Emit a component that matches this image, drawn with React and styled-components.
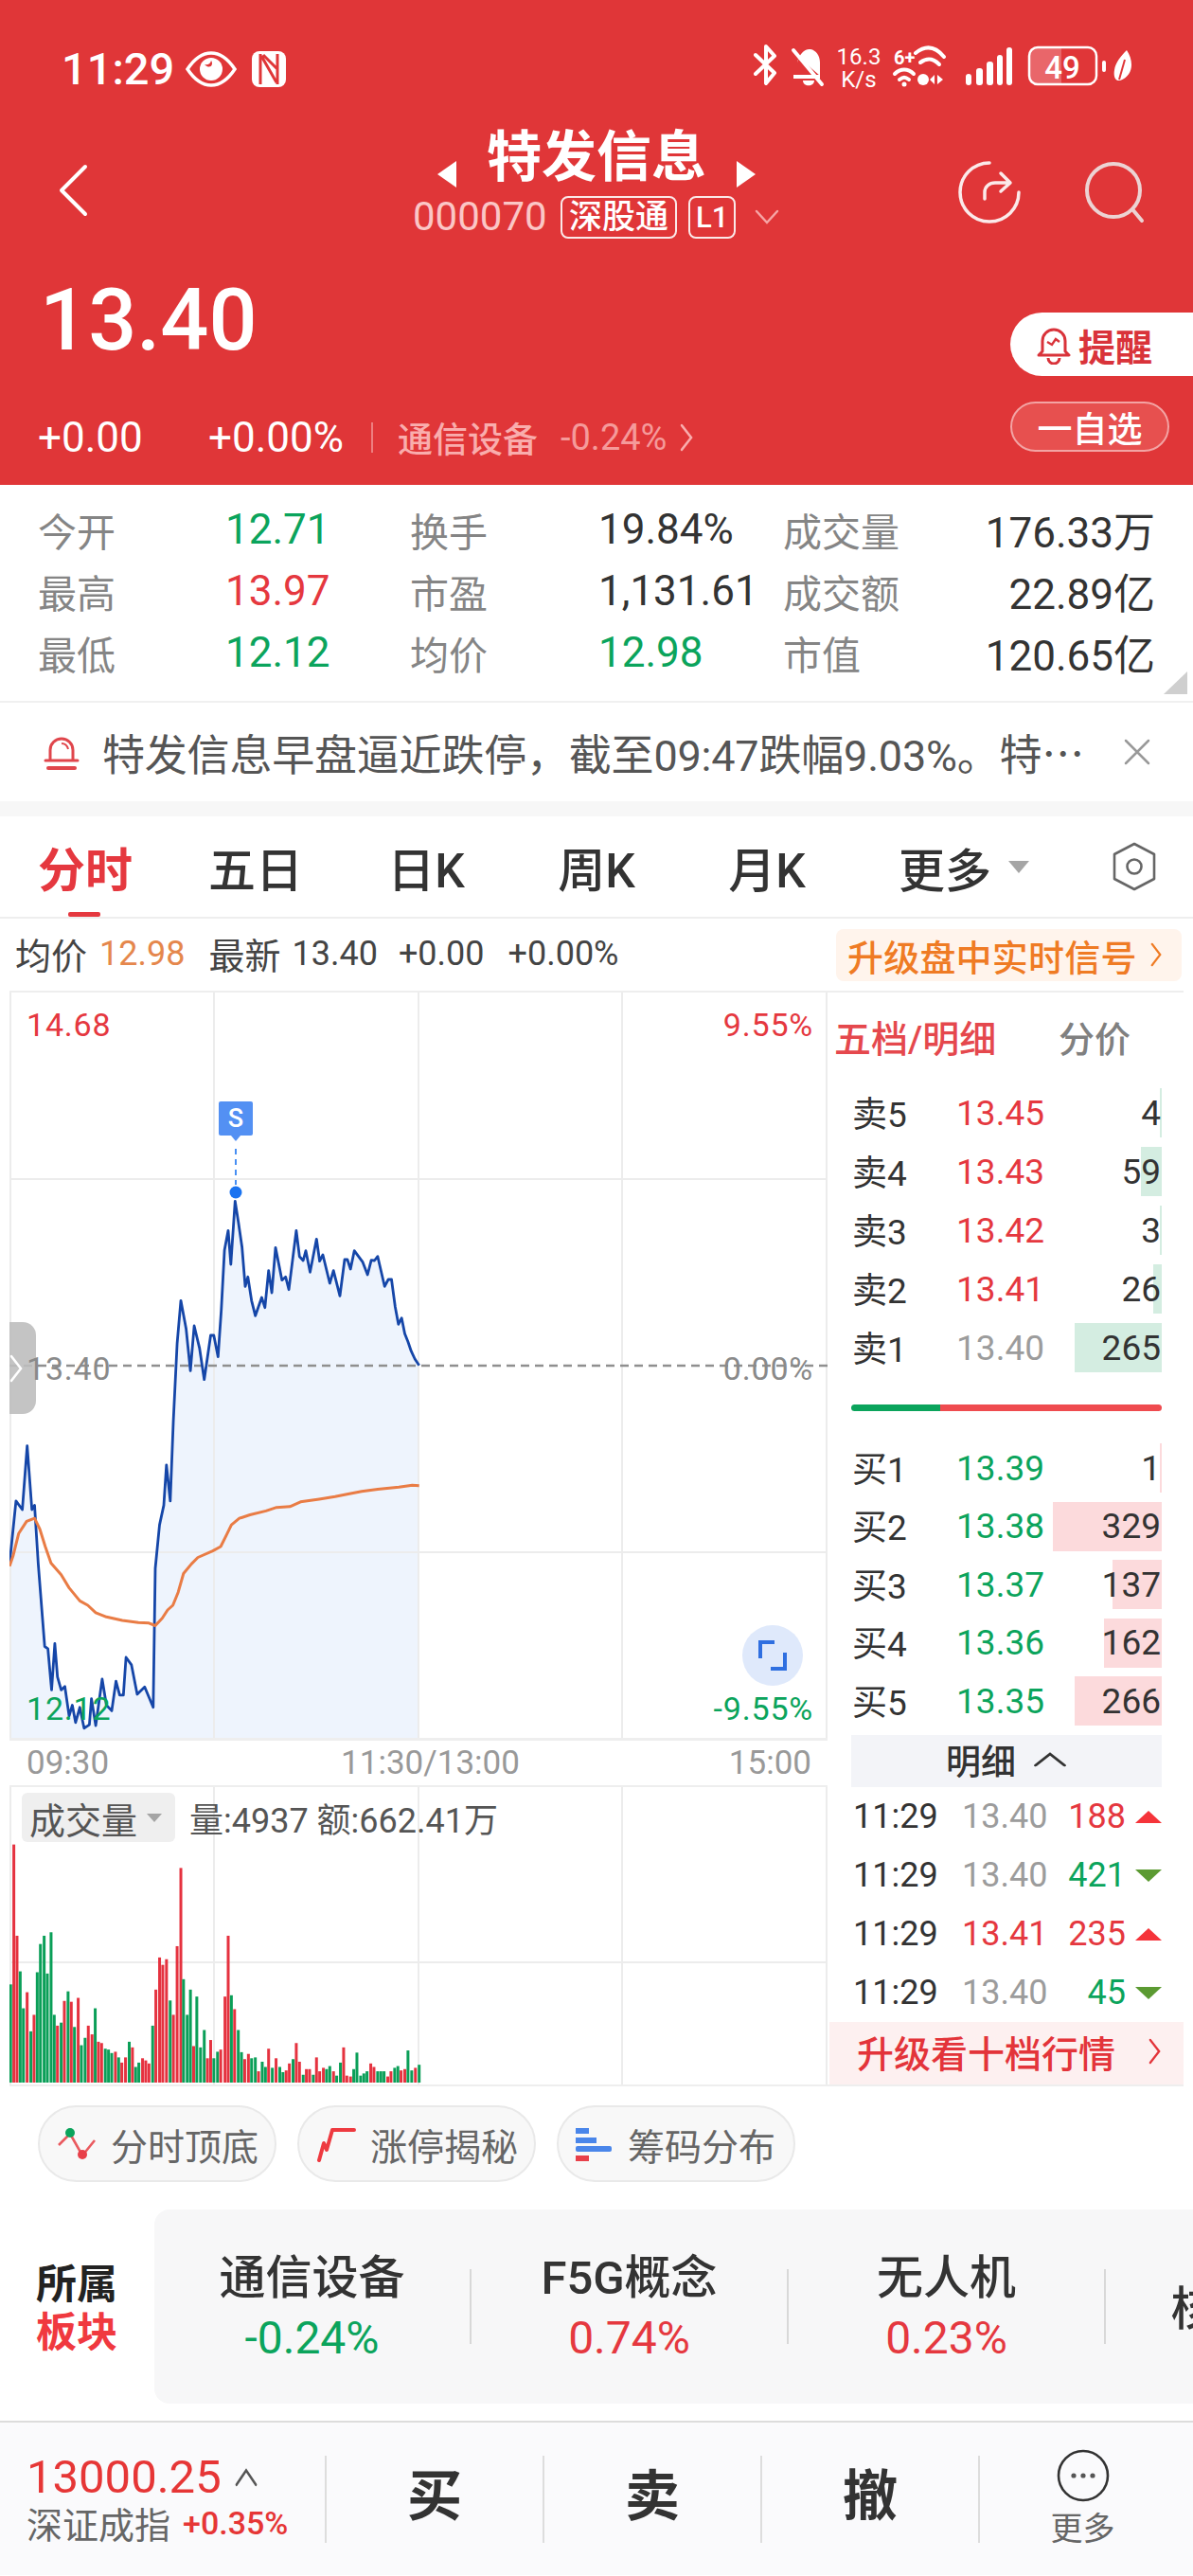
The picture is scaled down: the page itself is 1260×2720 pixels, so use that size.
import React from 'react';
import styled, { createGlobalStyle } from 'styled-components';

const GlobalStyle = createGlobalStyle`
  html, body { margin: 0; padding: 0; background: #fff; }
  body { font-family: Roboto, "Noto Sans CJK SC", sans-serif; }
  * { box-sizing: border-box; }
`;

const RED = '#E5383F';
const GREEN = '#0BA45C';

const Page = styled.div`
  width: 1260px;
  height: 2720px;
  overflow: hidden;
  background: #fff;
  color: #333;
`;

/* ---------- red header ---------- */
const Header = styled.header`
  height: 512px;
  background: #e03638;
  color: #fff;
`;

const StatusBar = styled.div`
  height: 98px;
  padding: 48px 0 0 65px;
  display: flex;
  align-items: center;
`;

const Clock = styled.span`
  font-size: 47px;
  line-height: 50px;
  font-weight: 500;
  width: 131px;
`;

const StatusIcons = styled.div`
  margin-left: auto;
  margin-right: 64px;
`;

const NavRow = styled.div`
  height: 164px;
  display: grid;
  grid-template-columns: 400px 1fr 260px;
  align-items: center;
`;

const BackButton = styled.div`
  padding: 0 0 0 60px;
  margin-top: 46px;
`;

const TitleBlock = styled.div`
  display: flex;
  flex-direction: column;
  align-items: flex-start;
  margin-top: 28px;
`;

const TitleRow = styled.div`
  display: flex;
  align-items: center;
  margin-left: 62px;
  height: 60px;
`;

const StockName = styled.h1`
  margin: 0 32px;
  font-size: 58px;
  line-height: 60px;
  font-weight: 700;
`;

const Arrow = styled.span`
  width: 0;
  height: 0;
  margin-top: 36px;
  border-top: 14px solid transparent;
  border-bottom: 14px solid transparent;
  ${({ $dir }) => ($dir === 'left' ? 'border-right: 20px solid #fff;' : 'border-left: 20px solid #fff;')}
`;

const CodeRow = styled.div`
  display: flex;
  align-items: center;
  margin: 10px 0 0 36px;
`;

const Code = styled.span`
  font-size: 42px;
  line-height: 46px;
  color: #fbc6c6;
  width: 156px;
`;

const Tag = styled.span`
  height: 45px;
  padding: 0 ${({ $wide }) => ($wide ? 7 : 6)}px;
  margin-right: ${({ $wide }) => ($wide ? 12 : 20)}px;
  border: 2px solid #fbe9e9;
  border-radius: 8px;
  font-size: ${({ $wide }) => ($wide ? 35 : 31)}px;
  line-height: 39px;
  font-weight: 500;
  display: flex;
  align-items: center;
`;

const NavActions = styled.div`
  display: flex;
  justify-content: flex-end;
  padding-right: 47px;
  margin-top: 46px;
`;

const QuoteRow = styled.div`
  display: flex;
  justify-content: space-between;
`;

const PriceBlock = styled.div`
  padding: 27px 0 0 42px;
`;

const BigPrice = styled.div`
  font-size: 90px;
  line-height: 100px;
  font-weight: 500;
`;

const ChangeRow = styled.div`
  margin: 48px 0 0 -2px;
  height: 50px;
  display: flex;
  align-items: center;
  font-size: 44px;
`;

const ChangeValue = styled.span`
  width: ${({ $w }) => $w}px;
`;

const VDivider = styled.span`
  width: 2px;
  height: 32px;
  margin: 0 26px 0 0;
  background: #ee7f80;
`;

const Sector = styled.span`
  font-size: 37px;
  color: #f9adad;
  font-weight: 500;
  margin-right: 24px;
`;

const SectorPct = styled.span`
  font-size: 38px;
  color: #f59a9a;
  margin-right: 14px;
`;

const AlertColumn = styled.div`
  width: 193px;
  padding-top: 68px;
`;

const RemindButton = styled.div`
  height: 67px;
  background: #fff;
  border-radius: 34px 0 0 34px;
  display: flex;
  align-items: center;
  padding-left: 28px;
  gap: 8px;
  color: #d9333a;
  font-size: 39px;
  font-weight: 700;
`;

const WatchButton = styled.div`
  margin-top: 27px;
  width: 168px;
  height: 53px;
  border: 2px solid #f3a4a4;
  border-radius: 27px;
  background: #e7504f;
  display: flex;
  align-items: center;
  justify-content: center;
  font-size: 37px;
  font-weight: 500;
`;

/* ---------- stats ---------- */
const Stats = styled.section`
  position: relative;
  height: 230px;
  padding: 14px 40px 0;
  display: grid;
  grid-template-columns: 198px 195px 199px 195px auto 1fr;
  grid-auto-rows: 65px;
  align-items: center;
  border-bottom: 2px solid #f0f0f0;
`;

const StatLabel = styled.span`
  color: #858585;
  font-size: 41px;
`;

const StatValue = styled.span`
  color: ${({ $c }) => $c || '#333'};
  text-align: ${({ $right }) => ($right ? 'right' : 'left')};
  font-size: 44px;
  white-space: nowrap;
`;

const CornerMark = styled.span`
  position: absolute;
  right: 6px;
  bottom: 7px;
  width: 0;
  height: 0;
  border-left: 25px solid transparent;
  border-bottom: 24px solid #cfcfcf;
`;

const NewsBar = styled.section`
  height: 104px;
  padding: 0 45px;
  display: flex;
  align-items: center;
  color: #555;
`;

const NewsText = styled.span`
  flex: 1;
  margin-left: 23px;
  font-size: 45px;
  white-space: nowrap;
  letter-spacing: -0.2px;
`;

const Band = styled.div`
  height: 16px;
  background: #f7f7f7;
`;

/* ---------- tabs ---------- */
const TabBar = styled.nav`
  height: 108px;
  border-bottom: 2px solid #eee;
  display: flex;
  align-items: center;
`;

const Tab = styled.div`
  position: relative;
  width: 180px;
  height: 106px;
  display: flex;
  align-items: center;
  justify-content: center;
  font-size: 50px;
  font-weight: ${({ $on }) => ($on ? 700 : 500)};
  color: ${({ $on }) => ($on ? RED : '#333')};
  ${({ $on }) => $on && `
    &::after {
      content: '';
      position: absolute;
      left: 72px;
      bottom: 0;
      width: 34px;
      height: 5px;
      border-radius: 2px;
      background: ${RED};
    }
  `}
`;

const MoreTab = styled.div`
  display: flex;
  align-items: center;
  margin-left: 49px;
  font-size: 49px;
  font-weight: 500;
`;

const SmallCaret = styled.span`
  width: 0;
  height: 0;
  margin-left: ${({ $ml }) => $ml || 0}px;
  border-left: ${({ $s }) => $s}px solid transparent;
  border-right: ${({ $s }) => $s}px solid transparent;
  border-top: ${({ $s }) => $s * 1.2}px solid #a5a5a5;
`;

const SettingsWrap = styled.div`
  margin-left: 87px;
  display: flex;
`;

const InfoRow = styled.div`
  height: 76px;
  padding-left: 16px;
  display: flex;
  align-items: center;
  font-size: 36px;
  color: #444;
`;

const InfoItem = styled.span`
  margin-right: ${({ $mr }) => $mr}px;
  color: ${({ $c }) => $c || '#444'};
  margin-top: -3px;
`;

const InfoLabel = styled.span`
  margin-right: ${({ $mr }) => $mr}px;
  font-size: 38px;
  margin-top: -3px;
`;

const UpgradeSignal = styled.div`
  position: relative;
  margin-left: auto;
  margin-right: 12px;
  width: 365px;
  height: 55px;
  border-radius: 8px;
  background: #fff4ec;
  color: #ef7b24;
  font-size: 38px;
  font-weight: 500;
  display: flex;
  align-items: center;
  padding-left: 12px;
  letter-spacing: 0.2px;
  white-space: nowrap;
`;

/* ---------- chart + depth board ---------- */
const Board = styled.section`
  margin: 0 10px;
  height: 1157px;
  border-top: 2px solid #eee;
  border-bottom: 2px solid #eee;
  display: flex;
`;

const ChartColumn = styled.div`
  width: 864px;
  display: flex;
  flex-direction: column;
`;

const Pane = styled.div`
  position: relative;
  height: ${({ $h }) => $h}px;
  svg { display: block; }
`;

const PriceTag = styled.span`
  position: absolute;
  ${({ $right }) => ($right ? 'right: 15px;' : 'left: 18px;')}
  top: ${({ $top }) => $top}px;
  font-size: 34px;
  line-height: 40px;
  letter-spacing: 0.8px;
  color: ${({ $c }) => $c};
`;

const SideHandle = styled.div`
  position: absolute;
  left: 0;
  top: 348px;
  width: 28px;
  height: 97px;
  background: rgba(190, 190, 190, 0.9);
  border-radius: 0 14px 14px 0;
  display: flex;
  align-items: center;
`;

const SignalFlag = styled.div`
  position: absolute;
  left: 221px;
  top: 115px;
  width: 36px;
  height: 36px;
  background: #5390f3;
  border-radius: 2px;
  color: #fff;
  font-size: 27px;
  font-weight: 500;
  text-align: center;
  line-height: 36px;
  &::after {
    content: '';
    position: absolute;
    left: 13px;
    top: 36px;
    border-left: 5px solid transparent;
    border-right: 5px solid transparent;
    border-top: 6px solid #5390f3;
  }
`;

const ExpandButton = styled.div`
  position: absolute;
  left: 774px;
  top: 668px;
  width: 64px;
  height: 64px;
  border-radius: 50%;
  background: #dfe9fb;
  display: flex;
  align-items: center;
  justify-content: center;
`;

const TimeAxis = styled.div`
  height: 53px;
  border-top: 3px solid #eee;
  border-bottom: 2px solid #eee;
  padding: 0 17px 0 18px;
  display: flex;
  justify-content: space-between;
  align-items: center;
  font-size: 35px;
  color: #999;
`;

const MiddleTime = styled.span`
  margin-left: 24px;
`;

const VolumeHeader = styled.div`
  position: absolute;
  left: 13px;
  top: 6px;
  display: flex;
  align-items: center;
`;

const VolumeChip = styled.div`
  width: 162px;
  height: 52px;
  border-radius: 6px;
  background: #efefef;
  display: flex;
  align-items: center;
  padding-left: 8px;
  color: #555;
  font-size: 38px;
`;

const VolumeText = styled.span`
  margin-left: 15px;
  font-size: 36px;
  color: #555;
  white-space: nowrap;
`;

const DepthColumn = styled.div`
  width: 376px;
  padding: 0 23px 0 25px;
`;

const DepthHead = styled.div`
  height: 92px;
  margin: 0 0 9px -18px;
  display: flex;
  align-items: center;
  font-size: 39px;
  font-weight: 500;
`;

const DepthTitle = styled.span`
  color: #e5484d;
  width: 237px;
  white-space: nowrap;
`;

const DepthSub = styled.span`
  color: #808080;
  font-size: 38px;
`;

const QuoteList = styled.div`
  display: flex;
  flex-direction: column;
  gap: ${({ $gap }) => $gap}px;
`;

const QuoteItem = styled.div`
  position: relative;
  height: 52px;
  display: grid;
  grid-template-columns: 60px 144px 1fr;
  align-items: center;
  font-size: 37px;
`;

const Bar = styled.span`
  position: absolute;
  right: 0;
  top: 0;
  bottom: 0;
  background: ${({ $sell }) => ($sell ? '#d4ede1' : '#fcdadc')};
`;

const QuoteLabel = styled.span`
  position: relative;
  color: #333;
  padding-left: 1px;
  white-space: nowrap;
  margin-top: -3px;
`;

const QuotePrice = styled.span`
  position: relative;
  color: ${({ $c }) => $c};
  text-align: ${({ $left }) => ($left ? 'left' : 'right')};
`;

const QuoteVol = styled.span`
  position: relative;
  color: #333;
  text-align: right;
  padding-right: 1px;
`;

const RatioBar = styled.div`
  margin: 34px 0;
  height: 7px;
  border-radius: 4px;
  background: linear-gradient(90deg, ${GREEN} 0 94px, #ef4b4f 94px 100%);
`;

const DetailToggle = styled.div`
  margin-top: 10px;
  height: 55px;
  background: #f3f4f8;
  display: flex;
  align-items: center;
  justify-content: center;
  gap: 18px;
  padding-bottom: 3px;
  font-size: 37px;
  font-weight: 500;
`;

const TickList = styled.div`
  margin-top: 5px;
  display: flex;
  flex-direction: column;
  gap: 10px;
`;

const TickRow = styled.div`
  height: 52px;
  display: grid;
  grid-template-columns: 117px 90px 83px 1fr;
  align-items: center;
  font-size: 36px;
`;

const TickTime = styled.span`
  padding-left: 2px;
  color: #333;
`;

const TickVol = styled.span`
  color: ${({ $c }) => $c};
  text-align: right;
`;

const TickArrow = styled.span`
  justify-self: end;
  width: 0;
  height: 0;
  border-left: 14px solid transparent;
  border-right: 14px solid transparent;
  ${({ $up }) => ($up ? 'border-bottom: 13px solid #f5343a;' : 'border-top: 13px solid #5b9a32;')}
`;

const UpgradeDepth = styled.div`
  margin: 5px -23px 0 -23px;
  height: 66px;
  background: #fdf0f0;
  display: flex;
  align-items: center;
  padding: 0 24px 4px 29px;
  justify-content: space-between;
  color: #e3343a;
  font-size: 39px;
  font-weight: 500;
  white-space: nowrap;
`;

/* ---------- pills / sectors ---------- */
const PillRow = styled.div`
  display: flex;
  gap: 22px;
  padding: 20px 0 0 40px;
`;

const Pill = styled.div`
  width: 252px;
  height: 81px;
  background: #f8f8f8;
  border: 2px solid #e9e9e9;
  border-radius: 41px;
  display: flex;
  align-items: center;
  padding-left: 18px;
  gap: 15px;
  font-size: 39px;
  color: #666;
  white-space: nowrap;
`;

const SectorSection = styled.section`
  margin-top: 29px;
  display: flex;
  align-items: stretch;
`;

const SectorCaption = styled.div`
  width: 163px;
  flex: none;
  padding: 5px 0 0 38px;
  display: flex;
  flex-direction: column;
  justify-content: center;
  font-size: 43px;
  line-height: 51px;
  font-weight: 700;
  color: #222;
`;

const CaptionRed = styled.span`
  color: #f0393f;
`;

const SectorCard = styled.div`
  flex: 1;
  height: 205px;
  overflow: hidden;
  background: #f7f7f8;
  border-radius: 16px 0 0 16px;
  display: flex;
  align-items: center;
`;

const SectorItem = styled.div`
  flex: none;
  width: 333px;
  padding-top: 6px;
  text-align: center;
  white-space: nowrap;
`;

const SectorName = styled.div`
  font-size: 49px;
  line-height: 60px;
  font-weight: 500;
  color: #333;
`;

const SectorValue = styled.div`
  font-size: 48px;
  line-height: 66px;
  color: ${({ $c }) => $c};
`;

const ItemDivider = styled.span`
  flex: none;
  width: 2px;
  height: 79px;
  background: #d8d8d8;
`;

/* ---------- bottom bar ---------- */
const BottomBar = styled.footer`
  margin-top: 18px;
  height: 163px;
  border-top: 2px solid #dcdcdc;
  background: #fafafc;
  display: flex;
  align-items: center;
`;

const IndexBlock = styled.div`
  width: 343px;
  padding-left: 28px;
`;

const IndexTop = styled.div`
  height: 50px;
  display: flex;
  align-items: center;
  gap: 14px;
  font-size: 49px;
  color: #e63636;
`;

const IndexBottom = styled.div`
  height: 46px;
  display: flex;
  align-items: center;
  gap: 13px;
  font-size: 38px;
  color: #666;
  white-space: nowrap;
`;

const IndexPct = styled.span`
  font-size: 34px;
  font-weight: 500;
  color: #e63636;
`;

const BarDivider = styled.span`
  width: 2px;
  height: 92px;
  flex: none;
  background: #ddd;
`;

const TradeButton = styled.div`
  width: 228px;
  text-align: center;
  font-size: 58px;
  line-height: 70px;
  margin-top: -6px;
  font-weight: 700;
  color: #333;
`;

const MoreAction = styled.div`
  flex: 1;
  display: flex;
  flex-direction: column;
  align-items: center;
  padding-right: 8px;
`;

const MoreLabel = styled.span`
  margin-top: 6px;
  font-size: 34px;
  line-height: 44px;
  color: #666;
`;

/* ---------- data ---------- */
const statRows = [
  ['今开', '12.71', GREEN, '换手', '19.84%', '#333', '成交量', '176.33万'],
  ['最高', '13.97', RED, '市盈', '1,131.61', '#333', '成交额', '22.89亿'],
  ['最低', '12.12', GREEN, '均价', '12.98', GREEN, '市值', '120.65亿'],
];

const sells = [
  ['卖5', '13.45', RED, '4', 2],
  ['卖4', '13.43', RED, '59', 22],
  ['卖3', '13.42', RED, '3', 2],
  ['卖2', '13.41', RED, '26', 9],
  ['卖1', '13.40', '#9c9c9c', '265', 92],
];

const buys = [
  ['买1', '13.39', GREEN, '1', 2],
  ['买2', '13.38', GREEN, '329', 115],
  ['买3', '13.37', GREEN, '137', 52],
  ['买4', '13.36', GREEN, '162', 61],
  ['买5', '13.35', GREEN, '266', 92],
];

const ticks = [
  ['13.40', '#9c9c9c', '188', RED, true],
  ['13.40', '#9c9c9c', '421', GREEN, false],
  ['13.41', RED, '235', RED, true],
  ['13.40', '#9c9c9c', '45', GREEN, false],
];

const lowerBlue = [[18,330],[30,185],[42,205],[51,58],[60,205],[65,195],[72,330],[84,520],[90,525],[97,620],[103,513],[108,590],[115,620],[122,612],[130,680],[136,655],[142,695],[150,660],[158,708],[168,700],[172,640],[180,702],[192,595],[200,655],[210,668],[218,600],[225,632],[232,632],[237,545],[247,562],[258,630],[272,613],[288,660],[292,340],[300,240],[308,195],[313,102],[320,185],[326,0]];
const upperBlue = [[333,1135],[340,1000],[350,1090],[358,1222],[365,1080],[375,1150],[384,1250],[396,1110],[402,1110],[410,1178],[416,1030],[422,840],[429,778],[434,885],[442,685],[448,750],[455,830],[461,955],[466,925],[473,1000],[480,1048],[492,990],[498,1022],[505,905],[511,975],[518,832],[530,935],[537,925],[543,965],[557,778],[563,860],[570,873],[575,842],[583,910],[595,805],[601,875],[607,855],[620,945],[627,905],[639,985],[648,870],[653,870],[659,900],[666,842],[682,878],[691,918],[698,872],[704,873],[710,860],[723,955],[730,933],[736,933],[743,1020],[749,1075],[755,1055],[761,1105],[767,1130],[773,1160],[780,1185],[788,1205]];
const orangeLine = [[18,335],[25,310],[35,260],[50,232],[65,225],[75,250],[85,290],[96,328],[115,355],[130,385],[150,415],[165,425],[180,442],[200,452],[230,460],[260,465],[280,466],[292,472],[305,455],[315,436],[325,425],[335,395],[345,352],[360,330],[372,315],[400,300],[415,290],[425,265],[435,240],[450,225],[470,217],[500,208],[520,200],[545,198],[565,187],[600,181],[630,175],[650,170],[680,163],[710,158],[750,153],[775,149],[788,150]];

// traced from the screenshot: x, top of bar, 1 = red
const volumeBars = [[20,1300,0],[26,978,1],[32,1188,1],[38,1270,0],[44,1355,0],[51,1318,1],[58,1408,0],[64,1370,1],[70,1272,0],[76,1207,0],[83,1188,0],[89,1275,0],[96,1180,0],[102,1370,0],[108,1395,1],[115,1388,0],[121,1338,1],[128,1316,0],[134,1340,1],[140,1398,0],[147,1331,1],[153,1440,0],[160,1423,0],[166,1395,1],[173,1415,1],[179,1355,0],[185,1432,1],[191,1435,1],[198,1448,0],[204,1450,0],[210,1458,0],[217,1455,1],[223,1468,0],[229,1480,1],[236,1468,1],[243,1432,0],[249,1445,1],[255,1490,0],[261,1480,0],[268,1470,1],[274,1475,1],[280,1482,1],[287,1395,0],[293,1312,1],[300,1238,1],[306,1255,1],[313,1242,1],[320,1337,0],[326,1370,1],[333,1212,1],[340,1032,1],[345,1288,0],[352,1370,0],[358,1312,0],[364,1442,1],[370,1328,0],[377,1445,0],[384,1405,0],[390,1470,1],[396,1428,1],[402,1470,0],[409,1455,0],[415,1450,1],[423,1328,1],[429,1188,1],[435,1325,0],[441,1357,1],[448,1405,0],[454,1456,0],[460,1472,1],[467,1460,1],[473,1470,0],[480,1468,0],[486,1500,1],[493,1478,0],[499,1490,0],[505,1448,1],[512,1492,0],[519,1470,1],[526,1490,0],[532,1502,0],[538,1498,1],[544,1482,1],[551,1472,0],[557,1435,1],[563,1478,1],[570,1508,0],[576,1495,1],[582,1495,1],[589,1508,0],[595,1468,1],[601,1500,1],[608,1492,1],[614,1495,0],[620,1488,0],[627,1500,1],[633,1510,0],[640,1480,0],[646,1445,1],[652,1510,1],[659,1512,1],[665,1495,0],[671,1457,0],[678,1510,0],[684,1505,0],[690,1500,0],[697,1482,1],[703,1490,1],[710,1500,0],[716,1500,0],[722,1500,0],[729,1512,1],[735,1500,1],[742,1492,0],[748,1488,0],[754,1498,1],[761,1495,1],[767,1452,0],[774,1498,0],[781,1492,1],[788,1485,0]];

const lowerPoint = ([x, y]) => [x / 1.78, 1500 + y / 2.18];
const upperPoint = ([x, y]) => [x / 1.78, 1040 + y / 3];
const blueLine = [...lowerBlue.map(lowerPoint), ...upperBlue.map(upperPoint)];
const orangePoints = orangeLine.map(lowerPoint);
const toPath = (pts) => pts.map(([x, y]) => `${x.toFixed(1)},${y.toFixed(1)}`).join(' ');

/* ---------- drawings ---------- */
const EyeIcon = () => (
  <svg width="54" height="38" viewBox="0 0 54 38">
    <path d="M2 19C10 7 18 2 27 2s17 5 25 17c-8 12-16 17-25 17S10 31 2 19Z" fill="none" stroke="#fff" strokeWidth="3.5" />
    <circle cx="27" cy="19" r="12" fill="#fff" />
    <path d="M20 14c3 1 6 0 7-4 3 4-1 10-7 4Z" fill="#e03638" />
  </svg>
);

const NfcIcon = () => (
  <svg width="36" height="38" viewBox="0 0 36 38" style={{ marginLeft: 16 }}>
    <rect width="36" height="38" rx="8" fill="#fff" />
    <path d="M9 3v32M27 3v32M10 5l16 28M12 4l15 15" stroke="#e03638" strokeWidth="3" fill="none" />
  </svg>
);

const StatusGlyphs = () => (
  <svg width="400" height="50" viewBox="796 48 400 50">
    <g fill="none" stroke="#fff" strokeWidth="4" strokeLinejoin="round" strokeLinecap="round">
      <path d="M798 60l20 19-9 11V51l9 10-20 19" />
      <path d="M838 55l30 36" />
    </g>
    <path d="M842 68c2-9 8-15 14-14 6 1 10 7 10 14v14l-22-19Zm-4 16h26l4 0h-30Zm10 3h12c0 7-12 7-12 0Z" fill="#fff" />
    <rect x="838" y="81" width="28" height="4" fill="#fff" />
    <text x="907" y="70" textAnchor="middle" fontSize="24" fill="#fff" fontFamily="Roboto">16.3</text>
    <text x="907" y="94" textAnchor="middle" fontSize="24" fill="#fff" fontFamily="Roboto">K/s</text>
    <text x="944" y="70" fontSize="20" fontWeight="700" fill="#fff" fontFamily="Roboto">6+</text>
    <g fill="none" stroke="#fff" strokeWidth="4" strokeLinecap="round">
      <path d="M967 58c10-8 20-8 30 4" />
      <path d="M972 68c7-5 13-5 20 2" />
      <path d="M945 80c6-6 14-6 20 0" />
      <path d="M950 86c4-3 6-3 10 0" />
    </g>
    <circle cx="955" cy="91" r="2.5" fill="#fff" />
    <circle cx="975" cy="86" r="6" fill="#fff" />
    <path d="M987 81v10l-5-5ZM990 81v10l6-5Z" fill="#fff" />
    <g fill="#fff">
      <rect x="1020" y="80" width="6" height="12" rx="3" />
      <rect x="1031" y="74" width="7" height="18" rx="3" />
      <rect x="1042" y="67" width="7" height="25" rx="3" />
      <rect x="1053" y="60" width="6" height="32" rx="3" />
      <rect x="1063" y="52" width="6" height="40" rx="3" />
    </g>
    <path d="M1091 53h30v37h-30a4 4 0 0 1-4-4V57a4 4 0 0 1 4-4Z" fill="#e9666a" />
    <rect x="1087" y="52" width="71" height="39" rx="9" fill="none" stroke="#fff" strokeWidth="2.5" />
    <text x="1122" y="85" textAnchor="middle" fontSize="33" fontWeight="500" fill="#fff" fontFamily="Roboto">49</text>
    <rect x="1164" y="66" width="4" height="12" rx="2" fill="#fff" />
    <path d="M1190 55c8 12 7 27-7 32-6 1-7-6-6-11 1-8 7-15 13-21Z" fill="#fff" />
    <path d="M1188 65l-6 21" stroke="#e03638" strokeWidth="2" />
  </svg>
);

const BackIcon = () => (
  <svg width="34" height="56" viewBox="0 0 34 56">
    <path d="M30 3 5 28l25 25" fill="none" stroke="#fff" strokeWidth="4" strokeLinecap="round" strokeLinejoin="round" />
  </svg>
);

const ShareIcon = () => (
  <svg width="70" height="70" viewBox="0 0 70 70" style={{ marginRight: 63 }}>
    <path d="M35 4a31 31 0 1 0 31 31" fill="none" stroke="#fbeaea" strokeWidth="3.5" strokeLinecap="round" />
    <path d="M30 42v-7c0-6 5-10 11-10h15M47 15l10 10-10 9" fill="none" stroke="#fbeaea" strokeWidth="3.5" strokeLinecap="round" strokeLinejoin="round" />
  </svg>
);

const SearchIcon = () => (
  <svg width="70" height="70" viewBox="0 0 70 70">
    <circle cx="33" cy="33" r="28" fill="none" stroke="#ecd3d3" strokeWidth="4" />
    <path d="M53 53 63 65" stroke="#ecd3d3" strokeWidth="4" strokeLinecap="round" />
  </svg>
);

const BellIcon = ({ color }) => (
  <svg width="40" height="40" viewBox="0 0 40 40">
    <path d="M8 28V18a12 12 0 0 1 24 0v10" fill="none" stroke={color} strokeWidth="3" />
    <path d="M3 29h34" stroke={color} strokeWidth="3" strokeLinecap="round" />
    <path d="M6 37h28" stroke={color} strokeWidth="4" strokeLinecap="round" />
    <path d="M20 11c4 0 6 2 7 6" fill="none" stroke={color} strokeWidth="2" />
  </svg>
);

const RemindBell = () => (
  <svg width="36" height="42" viewBox="0 0 36 42">
    <path d="M6 28V17a12 12 0 0 1 24 0v11l4 4H2Z" fill="none" stroke="#d9333a" strokeWidth="3" strokeLinejoin="round" />
    <path d="M11 18l5 3 4-6 4 3" fill="none" stroke="#d9333a" strokeWidth="2.4" />
    <path d="M12 35a6 6 0 0 0 12 0" fill="none" stroke="#d9333a" strokeWidth="3" />
  </svg>
);

const CloseIcon = () => (
  <svg width="28" height="28" viewBox="0 0 28 28">
    <path d="M2 2l24 24M26 2 2 26" stroke="#999" strokeWidth="2.5" strokeLinecap="round" />
  </svg>
);

const SettingsIcon = () => (
  <svg width="48" height="52" viewBox="0 0 48 52">
    <path d="M24 2 45 13v26L24 50 3 39V13Z" fill="none" stroke="#666" strokeWidth="2.6" strokeLinejoin="round" />
    <circle cx="24" cy="26" r="7.5" fill="none" stroke="#666" strokeWidth="2.6" />
  </svg>
);

const TextChevron = ({ color, w = 14, h = 28, stroke = 2.5 }) => (
  <svg width={w} height={h} viewBox="0 0 14 28" preserveAspectRatio="none" style={{ flex: 'none' }}>
    <path d="M2 2l10 12L2 26" fill="none" stroke={color} strokeWidth={stroke} strokeLinecap="round" />
  </svg>
);

const VChevron = ({ color, w = 26, h = 16, up, stroke = 2.5 }) => (
  <svg width={w} height={h} viewBox="0 0 26 16" preserveAspectRatio="none" style={{ flex: 'none' }}>
    <path d={up ? 'M2 14 13 2l11 12' : 'M2 2l11 12L24 2'} fill="none" stroke={color} strokeWidth={stroke} strokeLinecap="round" />
  </svg>
);

const IntradayDrawing = () => (
  <svg width="864" height="787" viewBox="10 1048 864 787">
    <polygon points={`${toPath(blueLine)} 443,1835 10,1835`} fill="#eef4fd" />
    <g stroke="#ececec" strokeWidth="2">
      <path d="M11 1048v787M226 1048v787M442 1048v787M657 1048v787M873 1048v787" fill="none" />
      <path d="M10 1245h864M10 1639h864" fill="none" />
    </g>
    <path d="M10 1442h864" stroke="#8f8f8f" strokeWidth="2.4" strokeDasharray="9 6" />
    <polyline points={toPath(blueLine)} fill="none" stroke="#1546a8" strokeWidth="2.8" strokeLinejoin="round" />
    <polyline points={toPath(orangePoints)} fill="none" stroke="#e97c45" strokeWidth="3" strokeLinejoin="round" />
    <path d="M249 1213v38" stroke="#1a73f0" strokeWidth="1.6" strokeDasharray="6 5" />
    <circle cx="249" cy="1259" r="6.5" fill="#1a73f0" />
  </svg>
);

const VolumeDrawing = () => (
  <svg width="864" height="314" viewBox="10 1888 864 314">
    <path d="M11 1888v314M226 1888v314M442 1888v314M657 1888v314M873 1888v314M10 2073h864" stroke="#ececec" strokeWidth="2" fill="none" />
    {volumeBars.map(([x, top, up]) => (
      <rect key={x} x={x / 1.78 - 1.5} y={1500 + top / 2.18} width="3" height={2200 - (1500 + top / 2.18)} fill={up ? '#e5323f' : '#0a9f58'} />
    ))}
  </svg>
);

const ExpandIcon = () => (
  <svg width="32" height="34" viewBox="0 0 32 34">
    <path d="M18 3H3v17M14 31h15V14" fill="none" stroke="#2f6fe0" strokeWidth="4" />
  </svg>
);

const TopBottomIcon = () => (
  <svg width="42" height="36" viewBox="0 0 42 36">
    <path d="M2 19 14 7l13 23 13-16" fill="none" stroke="#ea5a5f" strokeWidth="2.6" />
    <circle cx="14" cy="6" r="5" fill="#0ba45c" />
    <circle cx="27" cy="29" r="5" fill="#e8404a" />
  </svg>
);

const LimitIcon = () => (
  <svg width="42" height="38" viewBox="0 0 42 38">
    <path d="M3 36l5-18 3 7L17 4h23" fill="none" stroke="#ee3a40" strokeWidth="4" strokeLinejoin="round" strokeLinecap="round" />
  </svg>
);

const ChipIcon = () => (
  <svg width="40" height="36" viewBox="0 0 40 36">
    <rect x="0" y="1" width="14" height="6" fill="#4a86ea" />
    <rect x="0" y="11" width="22" height="6" fill="#4a86ea" />
    <rect x="0" y="20" width="38" height="6" rx="2" fill="#4a86ea" />
    <rect x="0" y="30" width="14" height="6" fill="#e8404a" />
  </svg>
);

const MoreCircle = () => (
  <svg width="56" height="56" viewBox="0 0 56 56">
    <circle cx="28" cy="28" r="26" fill="none" stroke="#333" strokeWidth="2.6" />
    <circle cx="18" cy="28" r="2.6" fill="#555" />
    <circle cx="28" cy="28" r="2.6" fill="#555" />
    <circle cx="38" cy="28" r="2.6" fill="#555" />
  </svg>
);

const App = () => (
  <Page>
    <GlobalStyle />
    <Header>
      <StatusBar>
        <Clock>11:29</Clock>
        <EyeIcon />
        <NfcIcon />
        <StatusIcons><StatusGlyphs /></StatusIcons>
      </StatusBar>
      <NavRow>
        <BackButton><BackIcon /></BackButton>
        <TitleBlock>
          <TitleRow>
            <Arrow $dir="left" />
            <StockName>特发信息</StockName>
            <Arrow $dir="right" />
          </TitleRow>
          <CodeRow>
            <Code>000070</Code>
            <Tag $wide>深股通</Tag>
            <Tag>L1</Tag>
            <VChevron color="#f6a5a5" />
          </CodeRow>
        </TitleBlock>
        <NavActions>
          <ShareIcon />
          <SearchIcon />
        </NavActions>
      </NavRow>
      <QuoteRow>
        <PriceBlock>
          <BigPrice>13.40</BigPrice>
          <ChangeRow>
            <ChangeValue $w={180}>+0.00</ChangeValue>
            <ChangeValue $w={172}>+0.00%</ChangeValue>
            <VDivider />
            <Sector>通信设备</Sector>
            <SectorPct>-0.24%</SectorPct>
            <TextChevron color="#f9adad" w={14} h={30} />
          </ChangeRow>
        </PriceBlock>
        <AlertColumn>
          <RemindButton><RemindBell />提醒</RemindButton>
          <WatchButton>一自选</WatchButton>
        </AlertColumn>
      </QuoteRow>
    </Header>

    <Stats>
      {statRows.map((r) => (
        <React.Fragment key={r[0]}>
          <StatLabel>{r[0]}</StatLabel>
          <StatValue $c={r[2]}>{r[1]}</StatValue>
          <StatLabel>{r[3]}</StatLabel>
          <StatValue $c={r[5]}>{r[4]}</StatValue>
          <StatLabel>{r[6]}</StatLabel>
          <StatValue $right>{r[7]}</StatValue>
        </React.Fragment>
      ))}
      <CornerMark />
    </Stats>

    <NewsBar>
      <BellIcon color="#e0464c" />
      <NewsText>特发信息早盘逼近跌停，截至09:47跌幅9.03%。特⋯</NewsText>
      <CloseIcon />
    </NewsBar>
    <Band />

    <TabBar>
      <Tab $on>分时</Tab>
      <Tab>五日</Tab>
      <Tab>日K</Tab>
      <Tab>周K</Tab>
      <Tab>月K</Tab>
      <MoreTab>更多<SmallCaret $s={11} $ml={18} /></MoreTab>
      <SettingsWrap><SettingsIcon /></SettingsWrap>
    </TabBar>

    <InfoRow>
      <InfoLabel $mr={13}>均价</InfoLabel>
      <InfoItem $mr={25} $c="#e5874c">12.98</InfoItem>
      <InfoLabel $mr={12}>最新</InfoLabel>
      <InfoItem $mr={22}>13.40</InfoItem>
      <InfoItem $mr={25}>+0.00</InfoItem>
      <InfoItem $mr={0}>+0.00%</InfoItem>
      <UpgradeSignal>
        升级盘中实时信号
        <span style={{ width: 14 }} />
        <TextChevron color="#ef7b24" w={12} h={26} />
      </UpgradeSignal>
    </InfoRow>

    <Board>
      <ChartColumn>
        <Pane $h={787}>
          <IntradayDrawing />
          <PriceTag $top={14} $c={RED}>14.68</PriceTag>
          <PriceTag $top={14} $right $c={RED}>9.55%</PriceTag>
          <SideHandle><TextChevron color="#fff" w={14} h={30} /></SideHandle>
          <PriceTag $top={377} $c="#8a8a8a">13.40</PriceTag>
          <PriceTag $top={377} $right $c="#8a8a8a">0.00%</PriceTag>
          <PriceTag $top={736} $c={GREEN}>12.12</PriceTag>
          <PriceTag $top={736} $right $c={GREEN}>-9.55%</PriceTag>
          <SignalFlag>S</SignalFlag>
          <ExpandButton><ExpandIcon /></ExpandButton>
        </Pane>
        <TimeAxis>
          <span>09:30</span>
          <MiddleTime>11:30/13:00</MiddleTime>
          <span>15:00</span>
        </TimeAxis>
        <Pane $h={314}>
          <VolumeDrawing />
          <VolumeHeader>
            <VolumeChip>成交量<SmallCaret $s={8} $ml={10} /></VolumeChip>
            <VolumeText>量:4937 额:662.41万</VolumeText>
          </VolumeHeader>
        </Pane>
      </ChartColumn>

      <DepthColumn>
        <DepthHead>
          <DepthTitle>五档/明细</DepthTitle>
          <DepthSub>分价</DepthSub>
        </DepthHead>
        <QuoteList $gap={10}>
          {sells.map(([label, price, color, vol, w]) => (
            <QuoteItem key={label}>
              <Bar $sell style={{ width: w }} />
              <QuoteLabel>{label}</QuoteLabel>
              <QuotePrice $c={color}>{price}</QuotePrice>
              <QuoteVol>{vol}</QuoteVol>
            </QuoteItem>
          ))}
        </QuoteList>
        <RatioBar />
        <QuoteList $gap={9.5}>
          {buys.map(([label, price, color, vol, w]) => (
            <QuoteItem key={label}>
              <Bar style={{ width: w }} />
              <QuoteLabel>{label}</QuoteLabel>
              <QuotePrice $c={color}>{price}</QuotePrice>
              <QuoteVol>{vol}</QuoteVol>
            </QuoteItem>
          ))}
        </QuoteList>
        <DetailToggle>明细<VChevron color="#333" w={36} h={16} up /></DetailToggle>
        <TickList>
          {ticks.map(([price, pc, vol, vc, up], i) => (
            <TickRow key={i}>
              <TickTime>11:29</TickTime>
              <QuotePrice $left $c={pc}>{price}</QuotePrice>
              <TickVol $c={vc}>{vol}</TickVol>
              <TickArrow $up={up} />
            </TickRow>
          ))}
        </TickList>
        <UpgradeDepth>
          升级看十档行情
          <TextChevron color="#e3343a" w={13} h={28} />
        </UpgradeDepth>
      </DepthColumn>
    </Board>

    <PillRow>
      <Pill><TopBottomIcon />分时顶底</Pill>
      <Pill><LimitIcon />涨停揭秘</Pill>
      <Pill><ChipIcon />筹码分布</Pill>
    </PillRow>

    <SectorSection>
      <SectorCaption>
        <span>所属</span>
        <CaptionRed>板块</CaptionRed>
      </SectorCaption>
      <SectorCard>
        <SectorItem>
          <SectorName>通信设备</SectorName>
          <SectorValue $c={GREEN}>-0.24%</SectorValue>
        </SectorItem>
        <ItemDivider />
        <SectorItem>
          <SectorName>F5G概念</SectorName>
          <SectorValue $c={RED}>0.74%</SectorValue>
        </SectorItem>
        <ItemDivider />
        <SectorItem>
          <SectorName>无人机</SectorName>
          <SectorValue $c={RED}>0.23%</SectorValue>
        </SectorItem>
        <ItemDivider />
        <SectorItem>
          <SectorName>核心概念</SectorName>
        </SectorItem>
      </SectorCard>
    </SectorSection>

    <BottomBar>
      <IndexBlock>
        <IndexTop>13000.25<VChevron color="#555" w={24} h={20} up /></IndexTop>
        <IndexBottom>深证成指<IndexPct>+0.35%</IndexPct></IndexBottom>
      </IndexBlock>
      <BarDivider />
      <TradeButton>买</TradeButton>
      <BarDivider />
      <TradeButton>卖</TradeButton>
      <BarDivider />
      <TradeButton>撤</TradeButton>
      <BarDivider />
      <MoreAction>
        <MoreCircle />
        <MoreLabel>更多</MoreLabel>
      </MoreAction>
    </BottomBar>
  </Page>
);

export default App;
